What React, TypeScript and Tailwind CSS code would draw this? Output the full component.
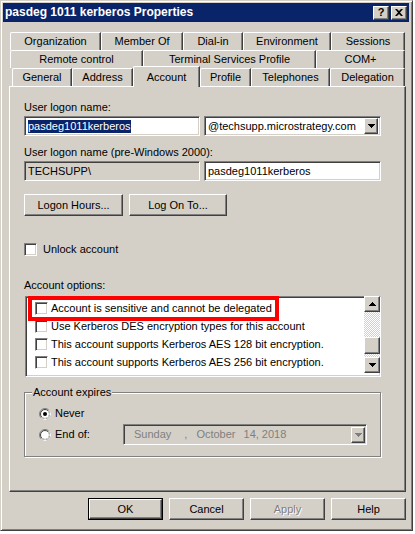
import React from 'react'

// classic 3D edges
const raised = 'border border-t-white border-l-white border-r-[#404040] border-b-[#404040] shadow-[inset_-1px_-1px_0_#808080]'
const sunken = 'border border-t-[#808080] border-l-[#808080] border-r-white border-b-white shadow-[inset_1px_1px_0_#404040,inset_-1px_-1px_0_#d4d0c8]'

const TAB_ROWS = [
  [
    { label: 'Organization', w: 'w-[91px]' },
    { label: 'Member Of', w: 'w-[82px]' },
    { label: 'Dial-in', w: 'w-[60px]' },
    { label: 'Environment', w: 'w-[88px]' },
    { label: 'Sessions', w: 'w-[74px]' },
  ],
  [
    { label: 'Remote control', w: 'w-[133px]' },
    { label: 'Terminal Services Profile', w: 'w-[173px]' },
    { label: 'COM+', w: 'w-[89px]' },
  ],
]
const FRONT_TABS = [
  { label: 'General', w: 'w-[60px]' },
  { label: 'Address', w: 'w-[61px]' },
  { label: 'Account', w: 'w-[67px]', active: true },
  { label: 'Profile', w: 'w-[51px]' },
  { label: 'Telephones', w: 'w-[79px]' },
  { label: 'Delegation', w: 'w-[75px]' },
]
const OPTIONS = [
  'Account is sensitive and cannot be delegated',
  'Use Kerberos DES encryption types for this account',
  'This account supports Kerberos AES 128 bit encryption.',
  'This account supports Kerberos AES 256 bit encryption.',
]

function Down({ color = '#000' }: { color?: string }) {
  return (
    <svg width="7" height="4" viewBox="0 0 7 4" fill={color}>
      <path d="M0 0h7v1h-1v1h-1v1h-1v1h-1v-1h-1v-1h-1v-1h-1z" />
    </svg>
  )
}
function Up() {
  return (
    <svg width="7" height="4" viewBox="0 0 7 4" fill="#000">
      <path d="M3 0h1v1h1v1h1v1h1v1h-7v-1h1v-1h1v-1h1z" />
    </svg>
  )
}

function Check() {
  return <div className={`w-[13px] h-[13px] shrink-0 bg-white ${sunken}`} />
}

function Radio({ on }: { on?: boolean }) {
  return (
    <svg width="12" height="12" viewBox="0 0 12 12" className="shrink-0">
      <circle cx="6" cy="6" r="5.5" fill="none" stroke="#808080" />
      <path d="M9.89 2.11A5.5 5.5 0 0 1 2.11 9.89" fill="none" stroke="#fff" />
      <circle cx="6" cy="6" r="4.5" fill="#fff" stroke="#404040" />
      <path d="M9.18 2.82A4.5 4.5 0 0 1 2.82 9.18" fill="none" stroke="#d4d0c8" />
      {on && <circle cx="6" cy="6" r="2" fill="#000" />}
    </svg>
  )
}

function Tab({ label, w }: { label: string; w: string }) {
  return (
    <div className={`${w} h-[18px] shrink-0 flex items-center justify-center rounded-tl-[2px] border-t border-l border-t-white border-l-white border-r border-r-[#404040] shadow-[inset_-1px_0_0_#808080]`}>
      {label}
    </div>
  )
}

function Btn({ label, w, cls = '' }: { label: string; w: string; cls?: string }) {
  return <div className={`${w} flex items-center justify-center ${raised} ${cls}`}>{label}</div>
}

export default function App() {
  return (
    <div className="w-[415px] h-[534px] bg-white font-['Liberation_Sans',Arial,sans-serif] text-[11px] leading-[13px] text-black">
      <div className="w-[413px] h-[531px] bg-[#d4d0c8] p-[2px] border border-t-[#d4d0c8] border-l-[#d4d0c8] border-r-[#404040] border-b-[#404040] shadow-[inset_1px_1px_0_#fff,inset_-1px_-1px_0_#808080]">
        {/* title bar */}
        <div className="h-[19px] w-[406px] bg-[#0a246a] flex items-center pl-[2px] pr-[2px]">
          <span className="text-white font-bold text-[12px] flex-1">pasdeg 1011 kerberos Properties</span>
          <div className={`w-[16px] h-[14px] bg-[#d4d0c8] flex items-center justify-center font-bold text-[11px] ${raised}`}>?</div>
          <div className={`ml-[2px] w-[16px] h-[14px] bg-[#d4d0c8] flex items-center justify-center ${raised}`}>
            <svg width="8" height="7" viewBox="0 0 8 7" fill="#000">
              <path d="M0 0h2l2 2 2-2h2l-3 3.5 3 3.5h-2l-2-2-2 2h-2l3-3.5z" />
            </svg>
          </div>
        </div>

        {/* tab rows */}
        <div className="mt-[10px] ml-[7px]">
          {TAB_ROWS.map((row, i) => (
            <div key={i} className="flex">
              {row.map(t => <Tab key={t.label} label={t.label} w={t.w} />)}
            </div>
          ))}
          <div className="flex items-end h-[18px] pl-[2px]">
            {FRONT_TABS.map(t =>
              t.active ? (
                <div key={t.label} className={`${t.w} h-[21px] -mb-[1px] relative z-10 bg-[#d4d0c8] shrink-0 flex items-start pt-[4px] justify-center rounded-tl-[2px] border-t border-l border-t-white border-l-white border-r border-r-[#404040] shadow-[inset_-1px_0_0_#808080]`}>
                  {t.label}
                </div>
              ) : (
                <Tab key={t.label} label={t.label} w={t.w} />
              )
            )}
          </div>
        </div>

        {/* account page */}
        <div className="ml-[6px] w-[397px] h-[406px] border border-t-white border-l-white border-r-[#404040] border-b-[#404040] shadow-[inset_-1px_-1px_0_#808080] pl-[14px] pt-[14px]">
          <div>User logon name:</div>
          <div className="mt-[2px] flex gap-[4px]">
            <div className={`w-[176px] h-[20px] bg-white flex items-center pl-[3px] ${sunken}`}>
              <span className="bg-[#0a246a] text-white h-[13px]">pasdeg1011kerberos</span>
            </div>
            <div className={`w-[177px] h-[20px] bg-white flex items-center pl-[3px] pr-[2px] ${sunken}`}>
              <span className="flex-1">@techsupp.microstrategy.com</span>
              <div className={`w-[14px] h-[16px] bg-[#d4d0c8] flex items-center justify-center ${raised}`}>
                <Down />
              </div>
            </div>
          </div>

          <div className="mt-[10px]">User logon name (pre-Windows 2000):</div>
          <div className="mt-[2px] flex gap-[4px]">
            <div className={`w-[176px] h-[20px] bg-[#d4d0c8] flex items-center pl-[3px] ${sunken}`}>TECHSUPP\</div>
            <div className={`w-[177px] h-[20px] bg-white flex items-center pl-[3px] ${sunken}`}>pasdeg1011kerberos</div>
          </div>

          <div className="mt-[13px] flex gap-[6px]">
            <Btn label="Logon Hours..." w="w-[99px] h-[22px]" />
            <Btn label="Log On To..." w="w-[98px] h-[22px]" />
          </div>

          <div className="mt-[27px] flex items-center gap-[6px] h-[13px]">
            <Check />
            <span>Unlock account</span>
          </div>

          <div className="mt-[23px]">Account options:</div>
          <div className={`relative mt-[4px] ml-[1px] w-[356px] h-[81px] bg-white flex ${sunken}`}>
            <div className="flex-1 pt-[2px] pl-[9px]">
              {OPTIONS.map(o => (
                <div key={o} className="h-[18px] flex items-center gap-[3px]">
                  <Check />
                  <span>{o}</span>
                </div>
              ))}
            </div>
            <div className="w-[16px] flex flex-col mt-[-1px]">
              <div className={`h-[16px] bg-[#d4d0c8] flex items-center justify-center ${raised}`}><Up /></div>
              <div className="h-[25px] bg-[image:repeating-conic-gradient(#d4d0c8_0%_25%,#ffffff_0%_50%)] bg-[length:2px_2px]" />
              <div className={`h-[17px] bg-[#d4d0c8] ${raised}`} />
              <div className="h-[3px] bg-[image:repeating-conic-gradient(#d4d0c8_0%_25%,#ffffff_0%_50%)] bg-[length:2px_2px]" />
              <div className={`h-[16px] bg-[#d4d0c8] flex items-center justify-center ${raised}`}><Down /></div>
            </div>
            {/* highlight around the first option */}
            <div className="absolute -top-[1px] left-[2px] w-[251px] h-[25px] border-[4px] border-[#ff0000]" />
          </div>

          {/* account expires */}
          <div className="relative mt-[15px] w-[357px] h-[65px] border border-[#808080] shadow-[1px_1px_0_#fff,inset_1px_1px_0_#fff] pl-[14px] pt-[14px]">
            <span className="absolute -top-[7px] left-[7px] px-[1px] bg-[#d4d0c8]">Account expires</span>
            <div className="flex items-center h-[13px] gap-[4px]">
              <Radio on />
              <span>Never</span>
            </div>
            <div className="mt-[4px] flex items-center h-[21px]">
              <Radio />
              <span className="ml-[4px] w-[68px]">End of:</span>
              <div className={`w-[244px] h-[21px] bg-[#d4d0c8] flex items-center text-[#808080] pr-[1px] ${sunken}`}>
                <span className="ml-[10px]">Sunday</span>
                <span className="ml-[13px]">,</span>
                <span className="ml-[9px]">October</span>
                <span className="ml-[8px]">14, 2018</span>
                <div className="flex-1" />
                <div className={`w-[14px] h-[16px] flex items-center justify-center ${raised}`}>
                  <Down color="#808080" />
                </div>
              </div>
            </div>
          </div>
        </div>

        {/* dialog buttons */}
        <div className="mt-[6px] ml-[85px] flex gap-[6px]">
          <div className="w-[75px] h-[22px] border border-black flex">
            <Btn label="OK" w="flex-1" />
          </div>
          <Btn label="Cancel" w="w-[75px] h-[22px]" />
          <Btn label="Apply" w="w-[75px] h-[22px]" cls="text-[#808080] [text-shadow:1px_1px_0_#fff]" />
          <Btn label="Help" w="w-[75px] h-[22px]" />
        </div>
      </div>
    </div>
  )
}
